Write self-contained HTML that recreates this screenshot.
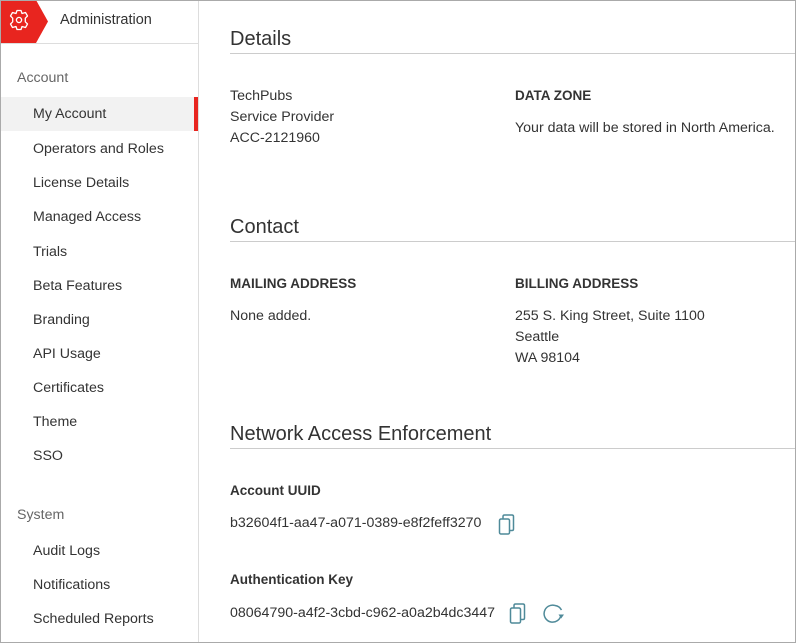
<!DOCTYPE html><html><head><style>
body{margin:0;width:796px;height:643px;overflow:hidden;font-family:"Liberation Sans",sans-serif;color:#333;background:#fff;position:relative}
.frame{position:absolute;inset:0;border:1px solid #aaa;pointer-events:none;z-index:5}
.side{position:absolute;left:0;top:0;width:198px;height:643px;border-right:1px solid #ddd;background:#fff}
.hdr{position:absolute;left:0;top:0;width:198px;height:43px;border-bottom:1px solid #ddd}
.t{position:absolute;white-space:nowrap;font-size:14.2px}
.g{color:#666}
.item{position:absolute;left:33px;font-size:14.2px;color:#333}
.h{position:absolute;left:230px;font-size:20px;color:#333}
.line{position:absolute;left:230px;right:0;height:1px;background:#ccc}
.b{font-weight:bold;font-size:13.5px}
</style></head><body>
<div class="side">
<div class="hdr">
<svg width="50" height="44" style="position:absolute;left:0;top:0"><polygon points="0,0 36,0 48,21.5 36,43 0,43" fill="#e8251f"/>
<g transform="translate(19,20)" fill="none" stroke="#fff" stroke-width="1.3" stroke-linejoin="round"><path d="M-2,-9.5 L2,-9.5 L3,-6.5 L6.5,-7.5 L8.5,-4 L6.3,-1.8 L6.3,1.8 L8.5,4 L6.5,7.5 L3,6.5 L2,9.5 L-2,9.5 L-3,6.5 L-6.5,7.5 L-8.5,4 L-6.3,1.8 L-6.3,-1.8 L-8.5,-4 L-6.5,-7.5 L-3,-6.5 Z"/><circle r="2.6"/></g></svg>
<div class="t" style="left:60px;top:12px;font-size:14.5px">Administration</div>
</div>
<div class="t g" style="left:17px;top:70px">Account</div>
<div style="position:absolute;left:0;top:97px;width:194px;height:34px;background:#f2f2f2"></div>
<div style="position:absolute;left:194px;top:97px;width:4px;height:34px;background:#e8251f"></div>
<div class="item" style="top:106px">My Account</div>
<div class="item" style="top:141px">Operators and Roles</div>
<div class="item" style="top:175px">License Details</div>
<div class="item" style="top:209px">Managed Access</div>
<div class="item" style="top:244px">Trials</div>
<div class="item" style="top:278px">Beta Features</div>
<div class="item" style="top:312px">Branding</div>
<div class="item" style="top:346px">API Usage</div>
<div class="item" style="top:380px">Certificates</div>
<div class="item" style="top:414px">Theme</div>
<div class="item" style="top:448px">SSO</div>
<div class="t g" style="left:17px;top:507px">System</div>
<div class="item" style="top:543px">Audit Logs</div>
<div class="item" style="top:577px">Notifications</div>
<div class="item" style="top:611px">Scheduled Reports</div>
</div>
<div class="h" style="top:28px">Details</div><div class="line" style="top:53px"></div>
<div class="t" style="left:230px;top:88px">TechPubs</div>
<div class="t" style="left:230px;top:109px">Service Provider</div>
<div class="t" style="left:230px;top:130px">ACC-2121960</div>
<div class="t b" style="left:515px;top:88px">DATA ZONE</div>
<div class="t" style="left:515px;top:120px">Your data will be stored in North America.</div>
<div class="h" style="top:216px">Contact</div><div class="line" style="top:241px"></div>
<div class="t b" style="left:230px;top:276px">MAILING ADDRESS</div>
<div class="t" style="left:230px;top:308px">None added.</div>
<div class="t b" style="left:515px;top:276px">BILLING ADDRESS</div>
<div class="t" style="left:515px;top:308px">255 S. King Street, Suite 1100</div>
<div class="t" style="left:515px;top:329px">Seattle</div>
<div class="t" style="left:515px;top:350px">WA 98104</div>
<div class="h" style="top:423px">Network Access Enforcement</div><div class="line" style="top:448px"></div>
<div class="t b" style="left:230px;top:483px">Account UUID</div>
<div class="t" style="left:230px;top:515px">b32604f1-aa47-a071-0389-e8f2feff3270</div>
<svg width="20" height="22" style="position:absolute;left:498px;top:514px" fill="none" stroke="#4f8a99" stroke-width="1.5"><rect x="1.5" y="5" width="10" height="15" rx="1.5"/><path d="M5,5 V2.5 Q5,1 6.5,1 H14 Q15.5,1 15.5,2.5 V15 Q15.5,16.5 14,16.5 H11.5"/></svg>
<div class="t b" style="left:230px;top:572px">Authentication Key</div>
<div class="t" style="left:230px;top:605px">08064790-a4f2-3cbd-c962-a0a2b4dc3447</div>
<svg width="20" height="22" style="position:absolute;left:509px;top:603px" fill="none" stroke="#4f8a99" stroke-width="1.5"><rect x="1.5" y="5" width="10" height="15" rx="1.5"/><path d="M5,5 V2.5 Q5,1 6.5,1 H14 Q15.5,1 15.5,2.5 V15 Q15.5,16.5 14,16.5 H11.5"/></svg>
<svg width="26" height="26" style="position:absolute;left:541px;top:601px" fill="none" stroke="#4f8a99" stroke-width="1.5"><path d="M20,14 A8.5,8.5 0 1 1 14,4.5"/><path d="M14,4.5 A8.5,8.5 0 0 1 20.5,9"/><polygon points="17.5,13.5 23,13.5 20.2,17.5" fill="#4f8a99" stroke="none"/></svg>
<div class="frame"></div>
</body></html>
